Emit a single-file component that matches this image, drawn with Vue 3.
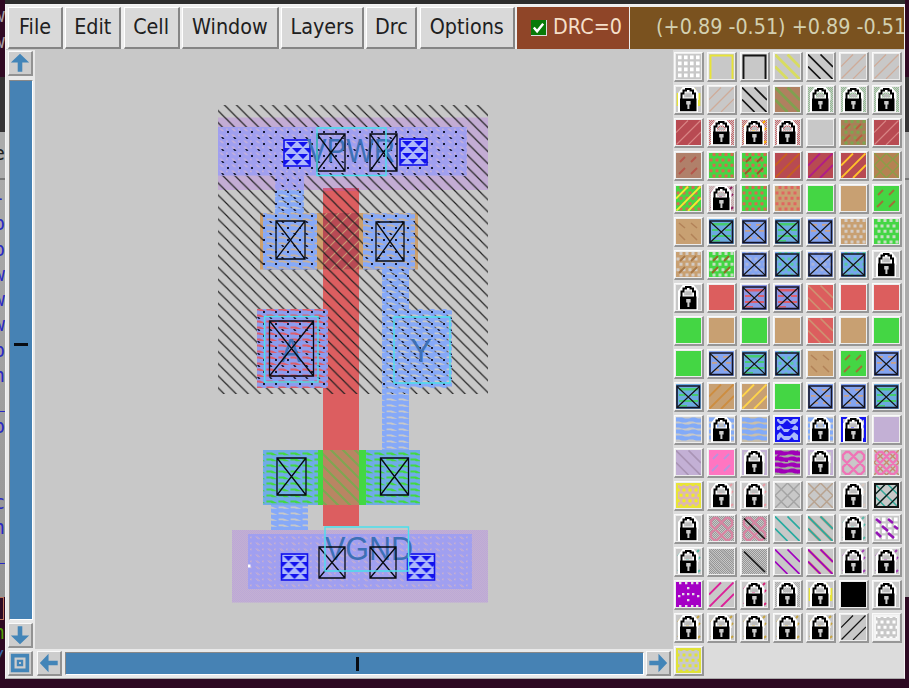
<script setup>
const menus = [
  { label: 'File', w: 55 }, { label: 'Edit', w: 56 }, { label: 'Cell', w: 56 },
  { label: 'Window', w: 97 }, { label: 'Layers', w: 83 }, { label: 'Drc', w: 51 }, { label: 'Options', w: 95 },
]
const behind = ['-', 'p', 'p', 'w', 'w', 'w', 'p', 'n', '_', 'p', '', '', 'c', 'n', '_']

const cells = (points, w, h) => points.map(([x, y]) => `M${x} ${y}h${w}v${h}h-${w}z`).join('')
const gridPts = []
for (let y = 1.5; y < 24; y += 6) for (let x = 2; x < 24; x += 6) gridPts.push([x, y])
const dotPts = []
for (let r = 0; r < 5; r++) for (let x = r % 2 ? 0.5 : 3.5; x < 23; x += 6) dotPts.push([x, r * 5.4])
const noisePts = []
for (let y = 0; y < 25; y++) for (let x = 0; x < 25; x++) if ((x + y) % 2 === 0) noisePts.push([x, y])
const wavePts = []
for (let y = 0; y < 24; y += 6) wavePts.push(`M0 ${y + 0.6}h6l3 1h4l3-1h3l3 1h3v3.8h-5l-3-1h-4l-3 1h-4l-3-1h-3z`)

const BD = 'M0 12.5L12.5 25M0 0.5L24.5 25M12.5 0.5L25 13'
const FD = 'M0 12.5L12 0.5M0.5 24.5L24.5 0.5M12 25L25 12'
const shapes = {
  grid: { f: cells(gridPts, 3.6, 3.8) },
  dots: { f: cells(dotPts, 3, 3) },
  noise: { f: cells(noisePts, 1, 1) },
  wave: { f: wavePts.join('') },
  stripes: { f: 'M3 4h19v2.500h-19zM3 10h6v2h-6zM16 10h6v2h-6zM3 16h19v2h-19zM3 21h8v1.500h-8z' },
  ticks: { f: 'M4 5h5v1.800h-5zM14 5h5v1.800h-5zM3 11h5v1.800h-5zM17 11h5v1.800h-5zM6 18h4v1.800h-4zM15 18h4v1.800h-4z' },
  bd: { s: BD, w: 1.7 },
  bdw: { s: BD, w: 2.8 },
  fd: { s: FD, w: 1.2 },
  fdw: { s: FD, w: 1.9 },
  one: { s: 'M2 2.5L23 23', w: 1.6 },
  dash: { s: 'M4 9l5-5M15 9l5-5M3 21l6-6M15 21l6-6', w: 1.8 },
  bdash: { s: 'M3 4l6 5M15 4l6 5M3 15l6 6M15 15l6 6', w: 1.5 },
  bdots: { s: 'M2 3l5 4M14 3l5 4M8 10l6 5M20 10l4 3M2 16l5 5M14 17l6 5', w: 2.6 },
  lat: { s: 'M0 12.5L12.5 0M0 25L25 0M12.5 25L25 12.5M0 12.5L12.5 25M0 0L25 25M12.5 0L25 12.5', w: 1.5 },
  latw: { s: 'M2 5l3-3h3l10 10 5 5v4l-3 3h-3L2 9zM23 5l-3-3h-3L7 12l-5 5v4l3 3h3L23 9z', w: 2.4 },
  top: { s: 'M1.5 25V1.5H23.5V25', w: 1.9 },
  edge: { s: 'M1 1H24V24H1Z', w: 2 },
  sides: { s: 'M2 6v13M23 6v13M5 3h3M17 3h3', w: 2.6 },
  specks: { s: 'M2 7l3-3M21 3l2-2M21 11l3-3M2 22l3-3M22 23l2-2M10 11h3', w: 2 },
  via: { f: 'M0 0H25V25H0ZM2 2v2l3 3h3l4-4 4 4h4l3-3v-2h-5l-2 2h-1l-2-2h-4l-2 2h-2l-1-2zM2 13v-3l3-2 4 4h7l4-4 3 2v3h-5l-2-2-3 4h-4l-3-4-2 2zM2 23v-5l3-3 4 4h6l4-4 4 3v5h-4l-2-3-3 3h-5l-3-3-2 3z' },
  box: { s: 'M1 2.5L23.5 23.5M1 23.5L23.5 2.5', w: 1.1 },
}
const T = '#c8a072', G = '#44d644', R = '#dc5e5e', D = '#b84a52', B = '#84a4f0', P = '#c3b0d5', Y = '#e8e438', K = '#141414'
const tile = (bg, ...layers) => ({ bg, layers })
const g = (...l) => tile('#c8c8c8', ...l)
const lock = (...l) => g(...l, ['lock'])
const boxed = (bg, ...l) => tile(bg, ...l, ['frame'], ['box', K])
const gb = () => boxed('#6caadf', ['stripes', '#46cc70'])
const tb = () => boxed(B, ['ticks', '#c8a088'])
const rb = () => boxed('#8c96e4', ['stripes', '#dc5e6c'])
const bb = () => boxed(B, ['dots', '#a9b3d9'])
const gd = () => boxed('#76a6ee', ['dots', '#58c8a0'])

const tiles = [
  g(['grid', '#fff']), g(['top', Y]), g(['top', K]), g(['bdw', '#d8dc60']), g(['bd', K]), g(['fd', '#cfab98']), g(['fd', '#cfab98']),
  lock(['sides', Y]), g(['fd', '#cfab98']), g(['bd', K]), tile('#b08060', ['bdw', '#80a050']), lock(['noise', '#90c090']), lock(['noise', '#90c090']), lock(['noise', '#90c090']),
  tile(D, ['fd', '#d88484']), lock(['noise', '#d06064']), lock(['noise', '#d06064'], ['specks', '#ffb000']), lock(['noise', '#d06064']), g(), tile('#a98058', ['dots', '#7ea450'], ['dash', '#b85e40']), tile(D, ['fd', '#d88484']),
  tile('#b0806a', ['dash', '#b55449']), tile(G, ['dots', '#d46c50']), tile(G, ['dots', '#d46c50'], ['dash', '#985a28']), tile(D, ['fdw', '#c66020']), tile(D, ['fdw', '#b01c88']), tile(D, ['fdw', '#ffc22a']), tile('#b58253', ['lat', '#8c9d48']),
  tile(G, ['dots', '#d46c50'], ['fdw', '#f1ed30']), lock(['noise', '#d1a5a8'], ['specks', '#8d2060']), tile(G, ['dots', '#d46c50']), tile(T, ['dots', '#e06660']), tile(G), tile(T), tile(G, ['dash', '#a07038']),
  tile(T, ['bdash', '#b28258']), gb(), tb(), gb(), tb(), tile(T, ['dots', '#d4ccc5']), tile(G, ['dots', '#c6dfc2']),
  tile(T, ['dots', '#d4ccc5'], ['dash', '#a87848']), tile(G, ['dots', '#c6dfc2'], ['dash', '#906b25']), bb(), gd(), bb(), gd(), lock(),
  lock(), tile(R), rb(), rb(), tile(R, ['bd', '#cf9072']), tile(R), tile(R),
  tile(G), tile(T), tile(G), tile(T), tile(R, ['bd', '#cf9072']), tile(T), tile(G),
  tile(G), tb(), gb(), gd(), tile(T, ['bdash', '#b28258']), tile(G, ['dash', '#a07038']), tb(),
  gb(), tile(T, ['fdw', '#cd8d40']), tile(T, ['fdw', '#ffd54a']), tile(G), tb(), tb(), gb(),
  g(['wave', '#82aaf8']), lock(['wave', '#82aaf8']), tile('#c9bea9', ['wave', '#82aaf8']), tile('#aabafa', ['via', '#1414f0']), lock(['wave', '#82aaf8']), lock(['edge', '#1414f0'], ['specks', '#1414f0']), tile(P),
  tile(P, ['bd', '#a994b5']), tile('#ff75c1', ['dash', '#b993db']), lock(['edge', P]), tile('#a6afa0', ['wave', '#a000b8'], ['specks', '#a000b8']), lock(['edge', P]), g(['latw', '#ef75b7']), g(['lat', '#c88b70'], ['latw', '#ef75b7']),
  tile('#ddb8b0', ['dots', '#eeee20'], ['edge', '#e8e438']), lock(['specks', '#e79da5']), lock(['specks', '#e79da5']), g(['lat', '#a4a4a4']), g(['lat', '#b8a390']), lock(['specks', '#d9c9c0']), g(['lat', '#35a99a'], ['fd', K], ['edge', K]),
  lock(), g(['noise', '#999'], ['latw', '#d785a2']), g(['noise', '#999'], ['latw', '#d785a2'], ['one', K]), g(['bd', '#28aaa0']), g(['bdw', '#bd9b80'], ['bd', '#28aaa0']), lock(['specks', '#5cb8a8']), g(['grid', '#fff'], ['bdots', '#9415b5']),
  lock(['specks', '#5cb8a8']), g(['noise', '#959595'], ['bd', '#a9a9a9']), g(['noise', '#959595'], ['one', K]), g(['bd', '#a000c0']), g(['bdw', '#d48b74'], ['bd', '#a000c0']), lock(['specks', '#a340b4']), lock(['specks', '#a340b4']),
  tile('#a400c5', ['purple', '#e6dce6']), g(['fdw', '#dc2098']), lock(['specks', '#d82478']), lock(['noise', '#aaa']), lock(['sides', Y]), tile('#000'), lock(),
  lock(['specks', '#c6a442']), lock(['specks', '#c6a442']), lock(['specks', '#c6a442']), lock(['specks', '#c6a442']), lock(['specks', '#c6a442']), g(['fd', K]), g(['dots', '#fff'], ['edge', '#f4f4f4']),
  g(['dots', '#e0e238'], ['edge', '#e0e238']),
]
shapes.purple = { f: cells([[3, 0], [9, 0], [15, 0], [20, 0], [11, 5], [11, 17], [2, 13], [6, 11], [16, 11], [21, 13], [3, 23], [9, 23], [15, 23], [20, 23], [11, 11]], 2.4, 2.2) }

const contacts = [
  [317, 134, 28, 37], [370, 134, 27, 37], [276, 221, 29, 38], [376, 222, 28, 39], [269.5, 321, 44, 55],
  [277, 458, 29, 37], [380.5, 458, 28, 37], [319, 547, 26, 31], [370, 547, 26, 31],
]
const vias = [[284, 140, 26, 26], [400, 139, 27, 26], [281.5, 554, 26, 26], [407.5, 554, 27, 26]]
</script>

<template>
  <div class="desktop">
    <div class="strip left">
      <div class="term"><span>w</span><span>w</span></div>
      <div class="dark"></div>
      <div class="head">e</div>
      <div class="editor"><span v-for="(c, i) in behind" :key="i">{{ c }}</span></div>
      <div class="shell"><i></i><span class="gr">n</span><span class="bl">/</span></div>
    </div>

    <div class="window">
      <header class="bar">
        <button v-for="m in menus" :key="m.label" class="menu" :style="{ width: m.w + 'px' }"><span class="txt">{{ m.label }}</span></button>
        <div class="drc">
          <svg class="check" viewBox="0 0 16 16"><path d="M3 8L6.5 12L13 4" /></svg>
          <span class="txt">DRC=0</span>
        </div>
        <div class="coords"><span class="txt">(+0.89 -0.51) +0.89 -0.51</span></div>
      </header>

      <div class="body">
        <section class="work">
          <div class="vscroll">
            <div class="knob"><svg viewBox="0 0 24 24"><path d="M12 2L22 11.5H14.5V21.5H9.5V11.5H2Z" /></svg></div>
            <div class="trough v"><b></b></div>
            <div class="knob"><svg viewBox="0 0 24 24"><path d="M12 22L22 12.5H14.5V2.5H9.5V12.5H2Z" /></svg></div>
          </div>

          <svg class="canvas" viewBox="35 50 638 599">
            <defs>
              <pattern id="well" width="12.05" height="12.05" patternUnits="userSpaceOnUse" patternTransform="translate(11 0)">
                <path d="M-1 -1L13.05 13.05M-1 11.05L1 13.05M11.05 -1L13.05 1" stroke="#202020" stroke-width="1.15" />
              </pattern>
              <pattern id="pins" width="12" height="12" patternUnits="userSpaceOnUse" patternTransform="translate(3 3)">
                <path d="M2 2h2l1.500 2h-2zM8 8h2v2h-2z" fill="#181c38" />
              </pattern>
              <pattern id="metal" width="12" height="6" patternUnits="userSpaceOnUse" patternTransform="translate(2 1)">
                <path fill="#86a9f8" fill-rule="evenodd" d="M0 0H12V6H0ZM.6 1.6H5.5L11.600 3.800H6L4.6 3.200H.6Z" />
              </pattern>
              <pattern id="metalred" width="12" height="6" patternUnits="userSpaceOnUse" patternTransform="translate(2 1)">
                <path fill="#8c9cee" fill-rule="evenodd" d="M0 0H12V6H0ZM.4 1.400H6L11.600 4H6L4.6 3.500H.4Z" />
              </pattern>
              <pattern id="tap" width="12" height="6" patternUnits="userSpaceOnUse" patternTransform="translate(2 1)">
                <path fill="#a09ff0" fill-rule="evenodd" d="M0 0H12V6H0ZM1 1.5H3.500L6.500 4.200H4ZM8 1.4H9.8V3.200H8Z" />
              </pattern>
              <pattern id="ntap" width="12" height="6" patternUnits="userSpaceOnUse" patternTransform="translate(2 1)">
                <path fill="#70abe8" fill-rule="evenodd" d="M0 0H12V6H0ZM.4 1.400H6L11.600 4.200H6L4.6 3.400H.4Z" />
              </pattern>
              <pattern id="mesh" width="2" height="2" patternUnits="userSpaceOnUse">
                <path d="M0 0h1v1h-1zM1 1h1v1h-1z" fill="#b8a3d8" opacity=".6" />
              </pattern>
              <pattern id="up" width="12" height="12" patternUnits="userSpaceOnUse">
                <path d="M-1 13L13 -1M-1 1L1 -1M11 13L13 11" stroke="#c99872" stroke-width="1.2" />
              </pattern>
              <pattern id="down" width="12" height="12" patternUnits="userSpaceOnUse" patternTransform="translate(1 0)">
                <path d="M-1 -1L13 13M-1 11L1 13M11 -1L13 1" stroke="#80a552" stroke-width="2.2" />
              </pattern>
              <pattern id="cut" width="12" height="12" patternUnits="userSpaceOnUse" patternTransform="translate(1 0)">
                <path d="M1 2H11L6 7ZM-5 8H5L0 13ZM7 8H17L12 13ZM-5 -4H5L0 1ZM7 -4H17L12 1Z" fill="#1212ee" />
              </pattern>
            </defs>

            <rect x="323" y="188" width="36" height="338" fill="#dc5e60" />
            <rect x="218" y="117.5" width="270" height="72.5" fill="#c3acd4" />
            <rect x="323" y="188" width="36" height="3" fill="#d05c80" />
            <rect x="260" y="213" width="158" height="56.5" fill="#cca06e" />
            <rect x="323" y="213" width="36" height="56.5" fill="#b84a54" />
            <rect x="323" y="213" width="36" height="56.5" fill="url(#up)" />
            <rect x="218" y="105" width="270" height="289" fill="url(#well)" />
            <rect x="257" y="309" width="71" height="79" fill="#dc5e6c" />
            <rect x="218" y="127" width="249" height="48.5" fill="#c0aedb" />
            <rect x="218" y="127" width="249" height="48.5" fill="url(#tap)" />
            <rect x="275" y="175.5" width="29" height="14.5" fill="url(#tap)" />
            <path d="M263 213H317V269.500H263ZM363 213H415V269.500H363Z" fill="#c6b09c" />
            <path d="M275 190H304V213H317V269.5H263V213H275ZM363 213H415V269.5H409V309H452V388H409V451H382V269.5H363ZM271 505H308V531H271Z" fill="url(#metal)" />
            <rect x="257" y="309" width="71" height="79" fill="url(#metalred)" />
            <path d="M218 127H467V175.500H304V213H317V269.500H263V213H275V175.500H218ZM363 213H415V269.500H409V309H452V388H382V269.500H363ZM257 309H328V388H257Z" fill="url(#pins)" />

            <rect x="263" y="450" width="157" height="55" fill="#43d843" />
            <rect x="323" y="450" width="36" height="55" fill="#b98563" />
            <rect x="323" y="450" width="36" height="55" fill="url(#down)" />
            <path d="M263 450H318V505H263ZM366 450H420V505H366Z" fill="url(#ntap)" />
            <rect x="232" y="530" width="256" height="72.5" fill="#c3b0d3" />
            <rect x="232" y="530" width="256" height="72.5" fill="url(#mesh)" />
            <rect x="248" y="534" width="224" height="55" fill="url(#tap)" />

            <g v-for="(v, i) in vias" :key="'v' + i">
              <rect :x="v[0]" :y="v[1]" :width="v[2]" :height="v[3]" fill="#acb7fb" />
              <svg :x="v[0]" :y="v[1]" :width="v[2]" :height="v[3]"><rect width="27" height="26" fill="url(#cut)" /></svg>
              <rect :x="v[0]" :y="v[1]" :width="v[2]" :height="v[3]" class="viabg" />
            </g>
            <text x="307" y="162" textLength="88" lengthAdjust="spacingAndGlyphs">VPWR</text>
            <text x="325" y="560" textLength="88" lengthAdjust="spacingAndGlyphs">VGND</text>
            <text x="281" y="362" textLength="20" lengthAdjust="spacingAndGlyphs">A</text>
            <text x="410" y="362" textLength="22" lengthAdjust="spacingAndGlyphs">Y</text>
            <path v-for="(c, i) in contacts" :key="'c' + i" class="contact" :d="`M${c[0]} ${c[1]}h${c[2]}v${c[3]}h-${c[2]}zl${c[2]} ${c[3]}m0 -${c[3]}l-${c[2]} ${c[3]}`" />
            <path class="cyan" d="M317 128H386V175.500H317ZM264.500 316.500H318V382H264.500ZM394 317H450V383H394ZM325 527H408.500V571H325Z" />
            <rect x="248" y="564.500" width="2.500" height="3" fill="#fff" />
          </svg>

          <div class="knob corner"><svg viewBox="0 0 24 24"><path fill-rule="evenodd" d="M2 2H22V22H2ZM6 6V18H18V6ZM8.500 8.500H15.500V15.500H8.500ZM11 11V13H13V11Z" /></svg></div>
          <div class="hscroll">
            <div class="knob"><svg viewBox="0 0 24 24"><path d="M2 12L11.500 2V9.500H21.500V14.500H11.500V22Z" /></svg></div>
            <div class="trough h"><b></b></div>
            <div class="knob"><svg viewBox="0 0 24 24"><path d="M22 12L12.500 2V9.500H2.500V14.500H12.500V22Z" /></svg></div>
          </div>
        </section>

        <aside class="palette">
          <div v-for="(t, i) in tiles" :key="i" class="tile">
            <svg viewBox="0 0 25 25">
              <rect width="25" height="25" :fill="t.bg" />
              <template v-for="(l, j) in t.layers" :key="j">
                <g v-if="l[0] === 'lock'">
                  <path d="M5 13V7L8.500 2.500H16L19.500 7V13" fill="none" stroke="#fff" stroke-width="6" />
                  <path d="M2 10.500H22V25H2Z" fill="#fff" />
                  <path d="M9.500 9l1-2h4l1 2v1h-6z" fill="#bbb" />
                  <path d="M5.500 12V6.500H7.500V3.500H10V2H14.500V3.500H17V6.500H19V12" fill="none" stroke="#000" stroke-width="2" />
                  <path d="M4 11.500H20.500V24.200H4Z" fill="#000" />
                  <path d="M10.200 14h4.400v3.500h-1.200v4.500h-2v-4.500h-1.200z" fill="#ccc" />
                </g>
                <path v-else-if="l[0] === 'frame'" d="M1 2H23.500V23.600H1Z" fill="none" stroke="#141428" stroke-width="1.600" />
                <path v-else-if="shapes[l[0]].f" :d="shapes[l[0]].f" :fill="l[1]" fill-rule="evenodd" />
                <path v-else :d="shapes[l[0]].s" :stroke="l[1]" :stroke-width="shapes[l[0]].w" fill="none" />
              </template>
            </svg>
          </div>
        </aside>
      </div>
    </div>

    <div class="strip right">
      <div class="term"></div><div class="dark"></div><div class="head"></div><div class="editor"></div><div class="shell"></div>
    </div>
  </div>
</template>

<style>
body { overflow: hidden; background: #2d0922; }
</style>

<style scoped>
* { box-sizing: border-box; }
.desktop { width: 909px; height: 688px; display: grid; grid-template-columns: 5px 900px 4px; background: linear-gradient(#2d2d2d 0 4px, #2d0922 4px); overflow: hidden; }
.strip { height: 688px; overflow: hidden; display: flex; flex-direction: column; font-family: "DejaVu Sans Mono", monospace; font-size: 19px; }
.strip span { display: block; width: 5px; direction: rtl; overflow: hidden; white-space: pre; }
.term { height: 77px; background: #310a24; color: #a79da5; flex: none; }
.term span { height: 26px; line-height: 26px; }
.term { padding-top: 2px; }
.dark { height: 55px; background: #353334; flex: none; }
.head { height: 48px; background: #ababab; border-bottom: 2px solid #777; line-height: 43px; direction: rtl; color: #222; flex: none; overflow: hidden; }
.editor { height: 417px; background: linear-gradient(#aaa, #959595); color: #2929c5; padding-top: 6px; flex: none; }
.editor span { height: 25.300px; line-height: 25.300px; }
.shell { flex: 1; background: #2d0922; }
.shell i { display: block; height: 23px; width: 4px; border: 1px solid #b9715c; border-left: 0; }
.shell span { height: 25px; line-height: 25px; }
.gr { color: #4e9a06; }
.bl { color: #3465a4; }
.right .editor { background: #aaa; }

.window { margin-top: 4px; height: 675px; background: #dadada; border: 1px solid #f3f3f3; border-bottom-color: #aaa; display: flex; flex-direction: column; }
.bar { height: 45px; padding: 2px 0 1px 2px; display: flex; background: #eee; overflow: hidden; flex: none; font: 19.200px "DejaVu Sans", sans-serif; border-bottom: 1px solid #c8c8c8; }
.menu { flex: none; height: 42px; padding: 0; margin-right: 2.300px; border: solid; border-width: 1px 2px 2px 1px; border-color: #fff #858585 #858585 #fff; background: #d9d9d9; color: #202020; font: inherit; display: flex; align-items: center; justify-content: center; }
.txt { display: inline-block; transform: scaleY(1.06); white-space: pre; line-height: 38px; }
.drc { flex: none; width: 112px; height: 42px; margin-left: 0; background: #8f4528; color: #f5dfc9; display: flex; align-items: center; padding-left: 14px; gap: 6px; }
.check { width: 16px; height: 16px; background: #087a08; border: solid #ddd; border-width: 0 1px 1px 0; }
.check path { fill: none; stroke: #fff; stroke-width: 2.600; }
.coords { flex: 1; min-width: 0; height: 42px; margin-left: 1px; background: #7a521f; color: #d3d0b0; padding-left: 26px; overflow: hidden; display: flex; align-items: center; }

.body { flex: 1; display: flex; min-height: 0; }
.work { width: 667px; display: grid; grid-template-columns: 29px 638px; grid-template-rows: 599px 29px; background: #e9e9e9; }
.vscroll { display: flex; flex-direction: column; align-items: center; justify-content: space-between; padding: 1px 0; }
.hscroll { display: flex; align-items: center; justify-content: space-between; padding: 0 2px; }
.knob { width: 25px; height: 25px; background: #cdcdcd; border: solid; border-width: 1px 2px 2px 1px; border-color: #fafafa #929292 #929292 #fafafa; flex: none; }
.knob svg { display: block; width: 100%; height: 100%; fill: #4385b8; }
.corner { margin: 2px; }
.trough { background: #4682b4; border: 1.500px solid; border-color: #888 #fff #fff #888; display: flex; align-items: center; justify-content: center; }
.trough.v { width: 24px; height: 540px; align-items: flex-start; padding-top: 262px; }
.trough.h { width: 579px; height: 23px; padding-left: 6px; }
.trough b { background: #080c12; }
.trough.v b { width: 14px; height: 3px; }
.trough.h b { width: 3px; height: 14px; }
.canvas { width: 638px; height: 599px; display: block; background: #c8c8c8; }
.canvas text { font: 34px "Liberation Sans", Arial, sans-serif; fill: #3d70b6; }
.contact { fill: none; stroke: #070b12; stroke-width: 1.300; }
.viabg { fill: none; stroke: #1111ed; stroke-width: 1.600; }
.cyan { fill: none; stroke: #4be0ec; stroke-width: 1.400; }
.palette { width: 231px; padding: 2px 0 0 1px; display: grid; grid-template-columns: repeat(7, 33px); grid-auto-rows: 33px; align-content: start; background: #dcdcdc; }
.tile { width: 30px; height: 30px; padding: 1px; margin: 0; border: solid; border-width: 1px 2px 2px 1px; border-color: #fafafa #969696 #969696 #fafafa; background: #ececec; }
.tile svg { display: block; width: 25px; height: 25px; }
</style>
